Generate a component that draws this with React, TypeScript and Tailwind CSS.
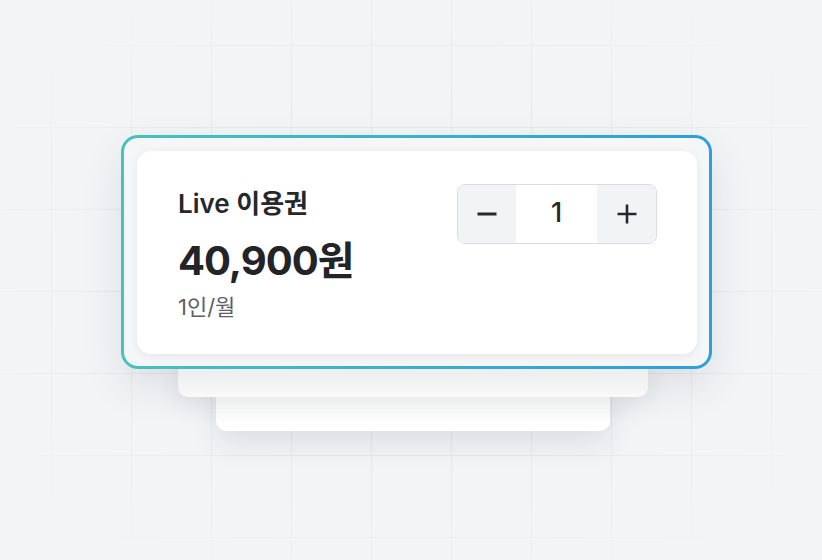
import React, { useState } from 'react';

const font = 'font-[Inter,"Noto_Sans_CJK_KR",sans-serif]';

function Stepper() {
  const [count, setCount] = useState(1);

  return (
    <div className="flex h-[60px] w-[200px] overflow-hidden rounded-[8px] border border-[#d9dce1]">
      <button
        onClick={() => setCount((c) => Math.max(1, c - 1))}
        className="flex w-[58px] items-center justify-center bg-[#f2f3f5]"
      >
        <svg width="20" height="20" viewBox="0 0 20 20">
          <line x1="0.5" y1="10" x2="19.5" y2="10" stroke="#26282c" strokeWidth="3" />
        </svg>
      </button>
      <div className="flex flex-1 items-center justify-center bg-white text-[27px] font-medium text-[#26282c]">
        {count}
      </div>
      <button
        onClick={() => setCount((c) => c + 1)}
        className="flex w-[59px] items-center justify-center bg-[#f2f3f5]"
      >
        <svg width="20" height="20" viewBox="0 0 20 20">
          <line x1="0.5" y1="10" x2="19.5" y2="10" stroke="#26282c" strokeWidth="2.6" />
          <line x1="10" y1="0.5" x2="10" y2="19.5" stroke="#26282c" strokeWidth="2.6" />
        </svg>
      </button>
    </div>
  );
}

export default function App() {
  return (
    <div
      className={`${font} flex h-[560px] w-full items-center justify-center bg-[#f3f4f6] bg-[image:radial-gradient(ellipse_at_center,transparent_45%,#f3f4f6_88%),linear-gradient(to_right,#e7e8eb_1px,transparent_1px),linear-gradient(to_bottom,#e7e8eb_1px,transparent_1px)] [background-size:100%_100%,80px_82px,80px_82px] [background-position:0_0,51px_45px,51px_45px] pl-[4px] pt-[5px]`}
    >
      <div className="flex flex-col items-center">
        {/* main card with gradient border */}
        <div className="relative z-20 ml-[7px] rounded-[17px] bg-[linear-gradient(to_right,#46c2bc,#2a9fdd)] p-[3px] shadow-[0_16px_40px_rgba(30,35,50,0.10)]">
          <div className="rounded-[14px] bg-[#f5f6f8] pb-[12px] pl-[13px] pr-[12px] pt-[13px]">
            <div className="flex h-[203px] w-[560px] items-start justify-between rounded-[14px] bg-white px-[40px] pt-[33px] shadow-[0_2px_10px_rgba(0,0,0,0.07)]">
              <div className="flex flex-col pl-[1px] pt-[5px]">
                <div className="text-[26px] font-semibold leading-[30px] text-[#26282c]">Live 이용권</div>
                <div className="mt-[18px] text-[40px] font-bold leading-[48px] tracking-tight text-[#222428]">
                  40,900원
                </div>
                <div className="mt-[9px] text-[22px] leading-[26px] text-[#5d6068]">1인/월</div>
              </div>
              <Stepper />
            </div>
          </div>
        </div>

        {/* stacked cards behind */}
        <div className="relative z-10 -mt-[32px] h-[60px] w-[470px] rounded-[10px] bg-white shadow-[0_10px_24px_rgba(30,35,50,0.08)]" />
        <div className="-mt-[26px] h-[60px] w-[394px] rounded-[10px] bg-white shadow-[0_12px_28px_rgba(30,35,50,0.10)]" />
      </div>
    </div>
  );
}
